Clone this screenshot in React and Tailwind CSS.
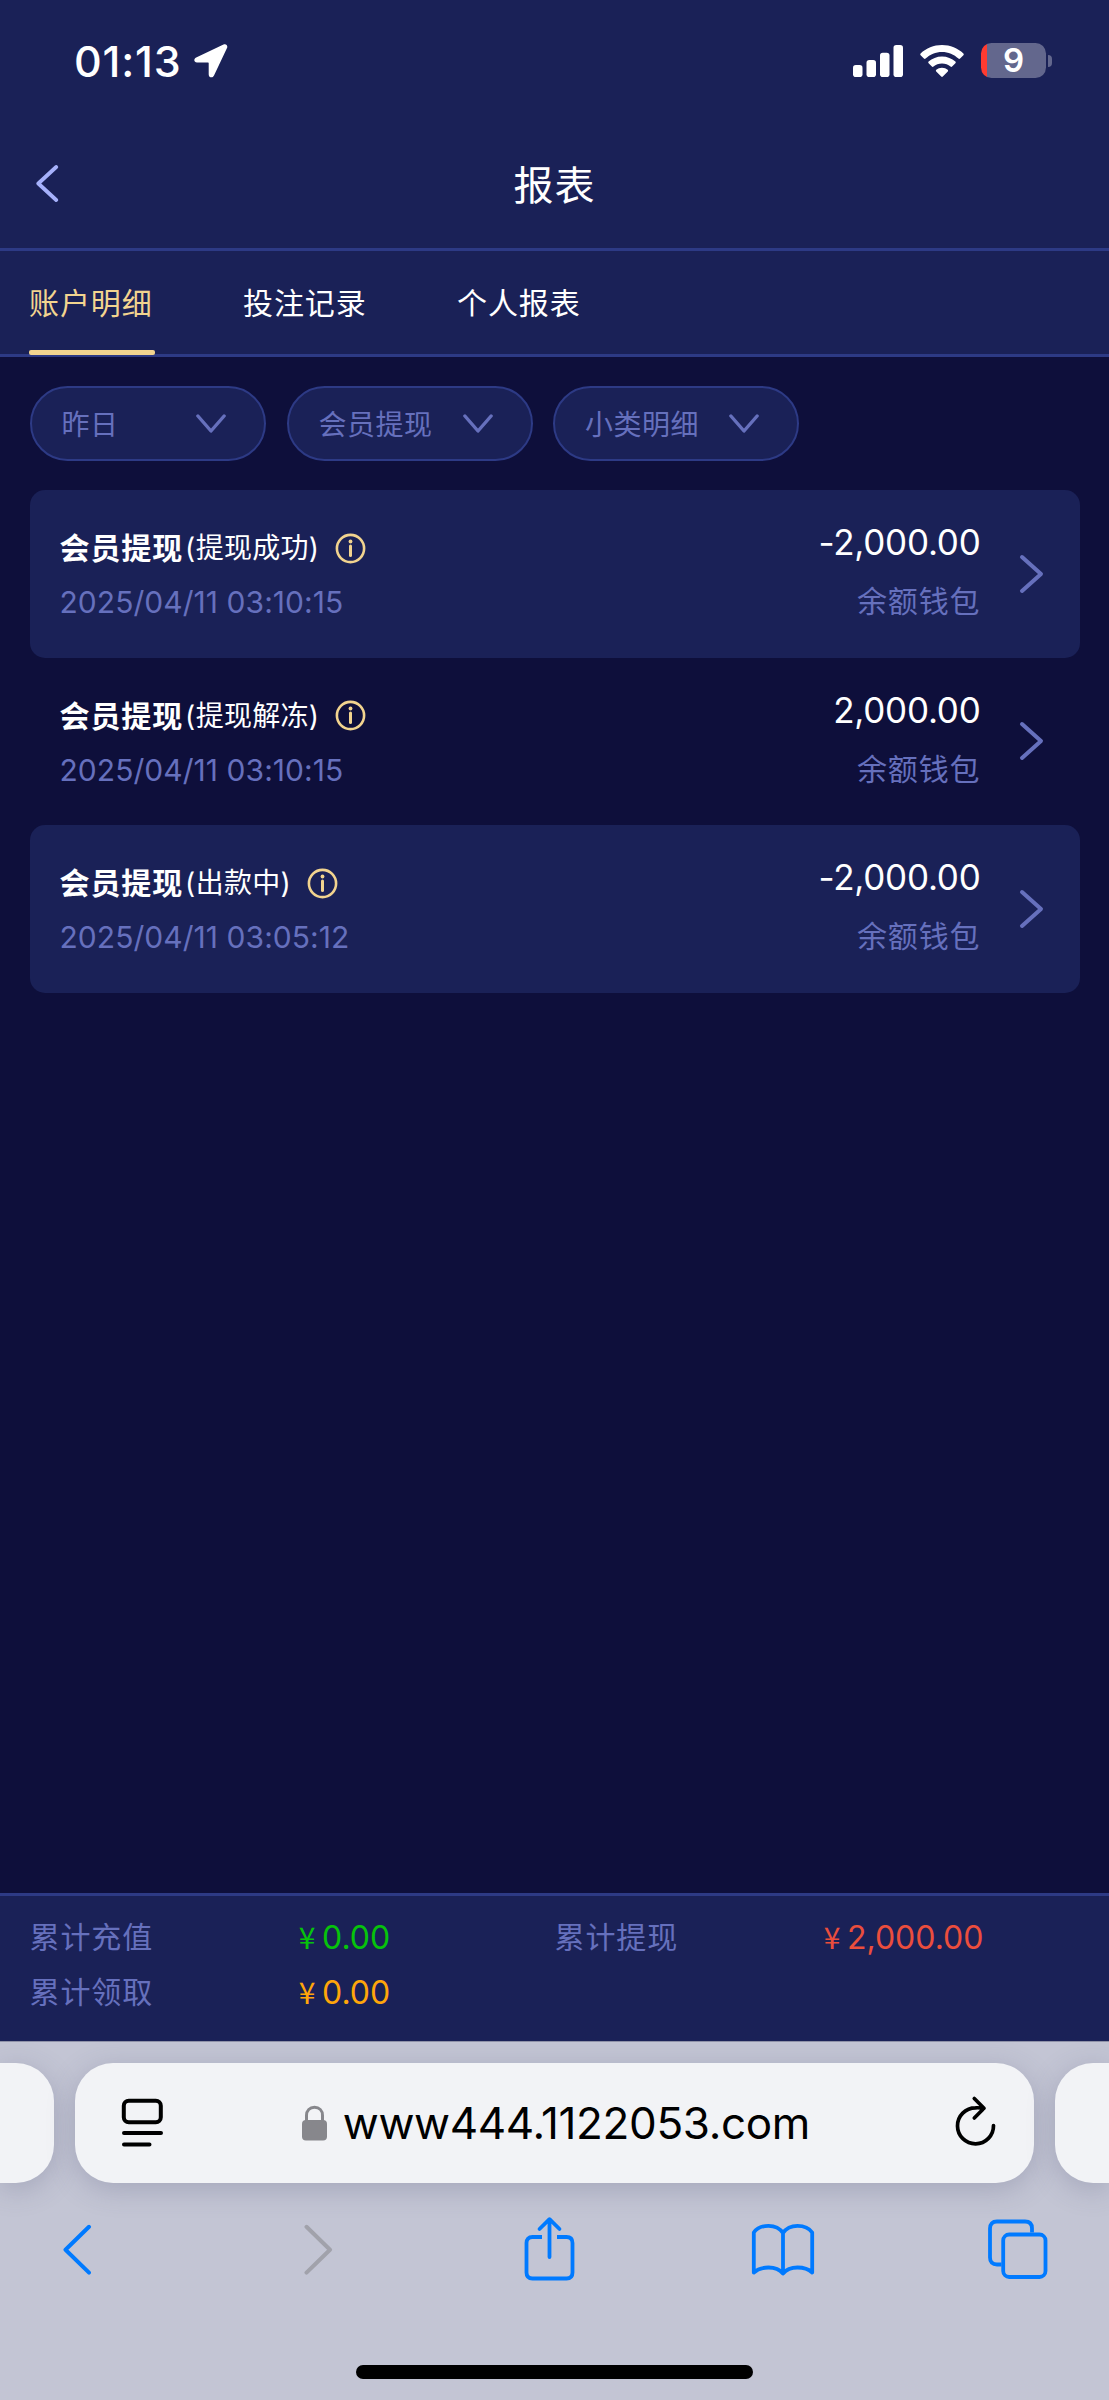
import React from "react";

const FONT = "font-['Inter','Noto_Sans_CJK_SC',sans-serif]";

function StatusBar() {
  return (
    <div className="flex h-[121px] items-center justify-between pl-[74px] pr-[57px] text-white">
      <div className="flex items-center">
        <span className="w-[107px] text-[43px] font-medium leading-[44px] tracking-[0.800px]">01:13</span>
        <svg className="ml-[13px]" width="34" height="34" viewBox="0 0 34 34" fill="currentColor">
          <path d="M29.500 .6 2.200 13.400C-.9 15 .1 18.600 3 18.600h11.100c.4 0 .6.200.6.600v11.200c0 3.100 3.800 4.200 5.300 1.100L33 4.100C34.100 1.500 32-.6 29.500.6Z" />
        </svg>
      </div>
      <div className="flex items-center">
        <svg width="50" height="32" viewBox="0 0 50 32" fill="currentColor">
          <rect x="0" y="20" width="9.500" height="12" rx="2.800" />
          <rect x="13.500" y="15" width="9.500" height="17" rx="2.800" />
          <rect x="27" y="7.700" width="9.500" height="24.300" rx="2.800" />
          <rect x="40.500" y="0" width="9.500" height="32" rx="2.800" />
        </svg>
        <svg className="ml-[17px]" width="44" height="32" viewBox="0 0 44 32" fill="currentColor">
          <path d="M22 0C30.300 0 37.800 3.200 43.400 8.500c.5.5.5 1.200 0 1.700l-3.300 3.400c-.5.5-1.200.5-1.700 0C34.100 9.500 28.300 7 22 7S9.900 9.500 5.600 13.600c-.5.5-1.200.5-1.700 0L.6 10.200c-.5-.5-.5-1.200 0-1.700C6.200 3.200 13.700 0 22 0Z" />
          <path d="M22 11.400c5.200 0 9.900 2 13.400 5.200.5.5.5 1.200 0 1.700l-3.300 3.300c-.4.5-1.100.5-1.600 0-2.300-2-5.200-3.200-8.500-3.200s-6.200 1.200-8.500 3.200c-.5.5-1.200.5-1.600 0l-3.300-3.300c-.5-.5-.5-1.200 0-1.700 3.500-3.200 8.200-5.200 13.400-5.200Z" />
          <path d="M22 22.700c2.200 0 4.200.8 5.700 2.100.5.4.5 1.100.1 1.600l-5 5.100c-.4.5-1.100.5-1.600 0l-5-5.100c-.4-.5-.4-1.200.1-1.600 1.500-1.300 3.500-2.100 5.700-2.100Z" />
        </svg>
        <div className="ml-[17px] flex h-[35px] w-[65px] items-center justify-center rounded-[10.500px] bg-[linear-gradient(to_right,#ff3b30_6px,#63678d_6px)] text-[33px] font-semibold leading-[35px]">
          9
        </div>
        <div className="ml-[2px] h-[12px] w-[4px] rounded-r-full bg-[#63678d]" />
      </div>
    </div>
  );
}

function Header() {
  return (
    <div className="grid h-[130px] grid-cols-[1fr_auto_1fr] items-center border-b-[3px] border-[#2d3a85] pl-[35px]">
      <svg className="mb-[2px]" width="25" height="37" viewBox="0 0 25 37" fill="none" stroke="#a6b1fb" strokeWidth="3.800" strokeLinecap="round" strokeLinejoin="round">
        <path d="M21.200 2 3.300 18.500 21.200 35" />
      </svg>
      <h1 className="-ml-[35px] mt-[2px] w-[85px] whitespace-nowrap text-center text-[40px] font-normal leading-[60px] tracking-[1px] text-white">报表</h1>
      <div />
    </div>
  );
}

function Tabs() {
  const tabs = ["账户明细", "投注记录", "个人报表"];
  return (
    <nav className="flex h-[106px] gap-[88px] border-b-[3px] border-[#2d3a85] pl-[29px] text-[30px] leading-[105px] tracking-[0.900px]">
      {tabs.map((t, i) => (
        <div key={t} className={i === 0 ? "flex w-[126px] flex-col text-[#f2d48f]" : "w-[126px] text-white"}>
          <span className="h-[99px] whitespace-nowrap">{t}</span>
          {i === 0 && <div className="h-[5px] shrink-0 rounded-[2px] bg-[#f2d48f]" />}
        </div>
      ))}
    </nav>
  );
}

function Pill({ label, className }) {
  return (
    <button className={"flex h-[75px] items-center justify-between rounded-full border-[2.500px] border-[#2d3a85] bg-[#1a2157] text-[28px] leading-[40px] tracking-[0.500px] text-[#6670bd] " + className}>
      <span className="mt-[2px]">{label}</span>
      <svg width="30" height="19" viewBox="0 0 30 19" fill="none" stroke="currentColor" strokeWidth="3.400" strokeLinecap="round" strokeLinejoin="round">
        <path d="M1.900 2 15 17 28.100 2" />
      </svg>
    </button>
  );
}

function Row({ status, time, amount, filled }) {
  return (
    <div className={"flex h-[167.500px] rounded-[15px] pl-[30px] pr-[35px] " + (filled ? "bg-[#1a2157]" : "")}>
      <div className="flex flex-1 flex-col pt-[34px]">
        <div className="flex h-[48px] items-center whitespace-nowrap text-white">
          <span className="text-[30px] font-bold leading-[48px] tracking-[0.900px]">会员提现</span>
          <span className="ml-[2px] text-[28px] leading-[48px] tracking-[0.300px]">({status})</span>
          <svg className="ml-[15.500px]" width="31" height="31" viewBox="0 0 31 31" fill="none" stroke="#f2d48f" strokeWidth="2.600">
            <circle cx="15.500" cy="15.500" r="13.600" />
            <path d="M15.500 13v9.500" strokeWidth="3" strokeLinecap="round" />
            <circle cx="15.500" cy="8.500" r="1.900" fill="#f2d48f" stroke="none" />
          </svg>
        </div>
        <span className="mt-[6px] text-[30px] leading-[48px] tracking-[0.050px] text-[#6670bd]">{time}</span>
      </div>
      <div className="flex flex-col items-end pt-[27px]">
        <span className="text-[35px] leading-[50px] tracking-[-0.250px] text-white">{amount}</span>
        <span className="mt-[10px] text-[30px] leading-[48px] tracking-[0.900px] text-[#6670bd]">余额钱包</span>
      </div>
      <svg className="ml-[38px] mt-[63.500px]" width="26" height="40" viewBox="0 0 26 40" fill="none" stroke="#6670bd" strokeWidth="4" strokeLinecap="round" strokeLinejoin="round">
        <path d="M3 3 22 20 3 37" />
      </svg>
    </div>
  );
}

function Money({ value, className }) {
  return (
    <span className={"flex h-[55px] whitespace-nowrap tracking-normal " + className}>
      <span className="w-[30px] text-center font-['Noto_Sans_CJK_SC',sans-serif] text-[30px] leading-[52px]">¥</span>
      <span className="text-[32px]">{value}</span>
    </span>
  );
}

function Totals() {
  const cell = "h-[55px] whitespace-nowrap";
  return (
    <div className="h-[148px] border-t-[3px] border-[#2d3a85] bg-[#1a2157] px-[29.500px] pt-[14px] text-[30px] leading-[55px] text-[#6670bd]">
      <div className="grid grid-cols-4 tracking-[0.900px]">
        <span className={cell}>累计充值</span>
        <Money value="0.00" className="text-[#07c30b]" />
        <span className={cell}>累计提现</span>
        <Money value="2,000.00" className="text-[#eb4e3d]" />
        <span className={cell}>累计领取</span>
        <Money value="0.00" className="text-[#ffa60a]" />
      </div>
    </div>
  );
}

function Browser() {
  const stroke = { fill: "none", strokeWidth: 4, strokeLinecap: "round", strokeLinejoin: "round" };
  const card = "h-[120.500px] shrink-0 bg-[#f2f3f6] shadow-[0_6px_28px_rgba(70,76,110,0.25)] ";
  return (
    <div className="flex h-[359px] flex-col overflow-hidden border-t border-[#8f92a8] bg-[#c3c5d4] pt-[20.500px]">
      <div className="flex justify-between">
        <div className={card + "w-[53.500px] rounded-r-[38px]"} />
        <div className={card + "flex w-[959px] items-center rounded-[38px] pl-[46px] pr-[37px] text-black"}>
          <svg width="43" height="50" viewBox="0 0 43 50" stroke="#000" {...stroke}>
            <rect x="2.800" y="2.800" width="37" height="21.500" rx="5" />
            <path d="M3 35H40M3 46.500H28.500" />
          </svg>
          <svg className="ml-[138px]" width="25" height="36" viewBox="0 0 25 36">
            <rect y="15" width="25" height="20.500" rx="4" fill="#87878c" />
            <path d="M4.500 17V10.500C4.500 5.500 7.800 2.300 12.500 2.300S20.500 5.500 20.500 10.500V17" fill="none" stroke="#87878c" strokeWidth="3" />
          </svg>
          <span className="ml-[16px] text-[44px] leading-[60px] tracking-[-0.350px]">www444.1122053.com</span>
          <svg className="mb-[3px] ml-auto" width="43" height="52" viewBox="0 0 43 52" stroke="#000" {...stroke} strokeWidth="3.700">
            <path d="M39.500 30.500A18 18 0 1 1 21.500 12.800C24.500 12.600 27 12.800 29.600 13.300M20.300 3.500 30 13.300 20.300 23" />
          </svg>
        </div>
        <div className={card + "w-[54px] rounded-l-[38px]"} />
      </div>
      <div className="mt-[33px] flex h-[66px] items-center pl-[61px]">
        <svg width="32" height="52" viewBox="0 0 32 52" stroke="#007aff" {...stroke}>
          <path d="M28 3.800 4.500 26.700 28 49.600" />
        </svg>
        <svg className="ml-[210px]" width="32" height="52" viewBox="0 0 32 52" stroke="#a1a2ab" {...stroke}>
          <path d="M3.500 3.800 27 26.700 3.500 49.600" />
        </svg>
        <svg className="ml-[188px]" width="53" height="66" viewBox="0 0 53 66" stroke="#007aff" {...stroke} strokeWidth="3.800">
          <path d="M19 21H9.500Q3.500 21 3.500 27V56.500Q3.500 62.500 9.500 62.500H43.500Q49.500 62.500 49.500 56.500V27Q49.500 21 43.500 21H34" strokeLinecap="butt" />
          <path d="M26.500 41V3.500M16.500 13 26.500 3.200 36.500 13" />
        </svg>
        <svg className="ml-[175px]" width="64" height="56" viewBox="0 0 64 56" stroke="#007aff" {...stroke} strokeWidth="3.800">
          <path d="M32 52.500V12C29 7.500 23.500 4.800 17.500 4.800S5.500 7.500 2.800 11.500V51.500C6 48.500 11.500 46.500 17.500 46.500S29 48.800 32 52.500C35 48.800 40.500 46.500 46.500 46.500S58 48.500 61.200 51.500V11.500C58.500 7.500 52.500 4.800 46.500 4.800S35 7.500 32 12" />
        </svg>
        <svg className="ml-[172px]" width="62" height="62" viewBox="0 0 62 62" stroke="#007aff" {...stroke} strokeWidth="3.800">
          <rect x="16.200" y="16.500" width="42.300" height="42.500" rx="6" />
          <path d="M14.500 46.500H10Q3 46.500 3 39.500V10.500Q3 3.500 10 3.500H38Q45 3.500 45 10.500V14.500" strokeLinecap="butt" />
        </svg>
      </div>
      <div className="mt-[83px] h-[14px] w-[397px] self-center rounded-full bg-black" />
    </div>
  );
}

export default function App() {
  return (
    <div className={"flex h-[2400px] w-[1109px] flex-col overflow-hidden bg-[#0e0f3b] " + FONT}>
      <div className="bg-[#1a2157]">
        <StatusBar />
        <Header />
        <Tabs />
      </div>
      <div className="flex gap-[20.500px] pl-[29.500px] pt-[29px]">
        <Pill label="昨日" className="w-[236.500px] pl-[30px] pr-[38px]" />
        <Pill label="会员提现" className="w-[246px] pl-[30px] pr-[38px]" />
        <Pill label="小类明细" className="w-[246px] pl-[30px] pr-[38px]" />
      </div>
      <div className="flex-1 px-[29.500px] pt-[29px]">
        <Row filled status="提现成功" time="2025/04/11 03:10:15" amount="-2,000.00" />
        <Row status="提现解冻" time="2025/04/11 03:10:15" amount="2,000.00" />
        <Row filled status="出款中" time="2025/04/11 03:05:12" amount="-2,000.00" />
      </div>
      <Totals />
      <Browser />
    </div>
  );
}
